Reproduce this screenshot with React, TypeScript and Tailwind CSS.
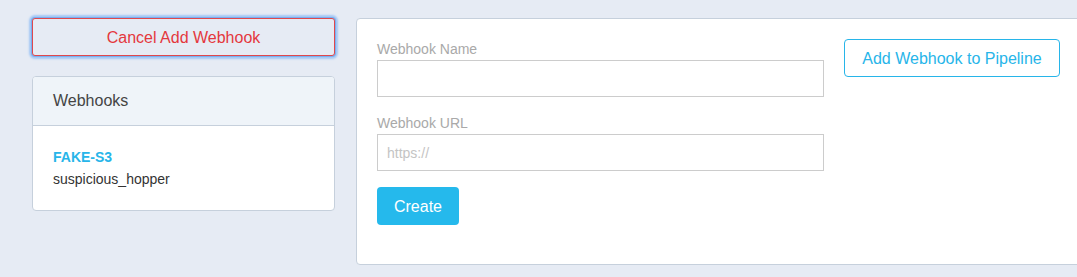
import React from 'react';

const App: React.FC = () => {
  return (
    <div className="w-full h-[277px] overflow-hidden bg-[#e6ebf4] font-['Liberation_Sans',Arial,sans-serif]">
      <div className="flex gap-[21px] pl-[32px] pt-[18px] w-[1200px]">
        {/* Left column */}
        <div className="w-[303px] shrink-0">
          <button className="w-full h-[38px] pt-[1px] rounded-[3px] border border-[#e0484d] bg-[#e6ebf4] text-[16px] text-[#e4383d] shadow-[0_0_0_1px_#7ab0f0,0_0_2px_3px_#a4c8f5]">
            Cancel Add Webhook
          </button>

          {/* Webhooks card */}
          <div className="mt-[20px] rounded-[4px] border border-[#c6d0dc] bg-white overflow-hidden">
            <div className="h-[49px] flex items-center pl-[20px] bg-[#eff4f9] border-b border-[#c6d0dc] text-[16px] text-[#444]">
              Webhooks
            </div>
            <div className="pl-[20px] pt-[21px] pb-[21px]">
              <div className="text-[14px] leading-[20px] font-bold text-[#27b5e9]">FAKE-S3</div>
              <div className="mt-[2px] text-[14px] leading-[20px] text-[#333]">suspicious_hopper</div>
            </div>
          </div>
        </div>

        {/* Right panel */}
        <div className="w-[760px] h-[247px] shrink-0 rounded-[4px] border border-[#c6d0dc] bg-white flex gap-[20px] pl-[20px] pt-[20px]">
          <div className="w-[447px]">
            <label className="block text-[14px] leading-[18px] text-[#a9a9a9] pt-[1px]">Webhook Name</label>
            <input
              type="text"
              className="mt-[2px] block w-full h-[37px] border border-[#cccccc] bg-white px-[9px] text-[14px] outline-none"
            />
            <label className="block mt-[17px] text-[14px] leading-[18px] text-[#a9a9a9]">Webhook URL</label>
            <input
              type="text"
              placeholder="https://"
              className="mt-[2px] block w-full h-[37px] border border-[#cccccc] bg-white px-[9px] text-[14px] outline-none placeholder:text-[#c4c4c4]"
            />
            <button className="mt-[16px] w-[82px] h-[38px] pt-[1px] rounded-[4px] bg-[#25b9ec] text-white text-[16px] font-medium">
              Create
            </button>
          </div>
          <div>
            <button className="w-[216px] h-[38px] pt-[1px] rounded-[4px] border border-[#27b5e9] bg-white text-[#27b5e9] text-[16px]">
              Add Webhook to Pipeline
            </button>
          </div>
        </div>
      </div>
    </div>
  );
};

export default App;
